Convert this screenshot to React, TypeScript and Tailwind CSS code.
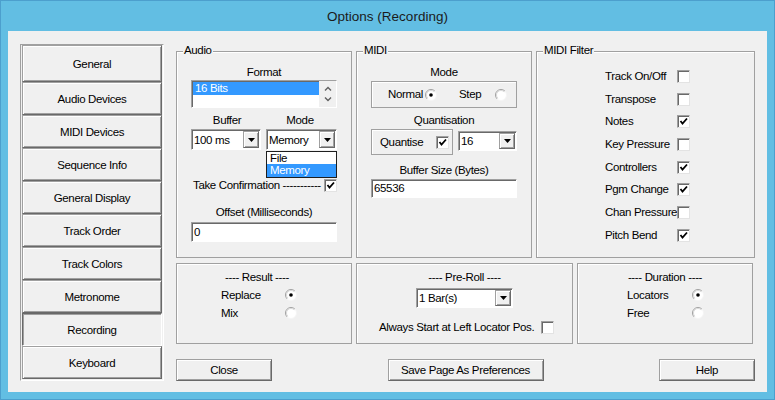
import React from 'react'

const sunken =
  'border border-t-[#a0a0a0] border-l-[#a0a0a0] border-r-white border-b-white shadow-[inset_1px_1px_0_#696969]'
const raised =
  'border border-t-[#a0a0a0] border-l-[#a0a0a0] border-r-[#696969] border-b-[#696969] shadow-[inset_1px_1px_0_#fff,inset_-1px_-1px_0_#a0a0a0]'
const pressed =
  'border border-t-[#696969] border-l-[#696969] border-r-white border-b-white shadow-[inset_1px_1px_0_#a0a0a0]'
const etched = 'border border-[#a0a0a0] shadow-[inset_1px_1px_0_#fff]'

const tabs = [
  'General',
  'Audio Devices',
  'MIDI Devices',
  'Sequence Info',
  'General Display',
  'Track Order',
  'Track Colors',
  'Metronome',
  'Recording',
  'Keyboard',
]

const filters: [string, boolean][] = [
  ['Track On/Off', false],
  ['Transpose', false],
  ['Notes', true],
  ['Key Pressure', false],
  ['Controllers', true],
  ['Pgm Change', true],
  ['Chan Pressure', false],
  ['Pitch Bend', true],
]

function Check({ checked }: { checked?: boolean }) {
  return (
    <span className="w-[13px] h-[13px] shrink-0 bg-white flex items-center justify-center border border-t-[#a0a0a0] border-l-[#a0a0a0] border-r-[#e3e3e3] border-b-[#e3e3e3] shadow-[inset_1px_1px_0_#696969]">
      {checked && (
        <svg width="9" height="9" viewBox="0 0 9 9">
          <polyline points="1.5,4 3.5,6.5 8,1.5" fill="none" stroke="#000" strokeWidth="1.8" />
        </svg>
      )}
    </span>
  )
}

function Radio({ checked }: { checked?: boolean }) {
  return (
    <svg width="12" height="12" viewBox="0 0 12 12" className="shrink-0">
      <circle cx="6" cy="6" r="5.5" fill="#fff" />
      <path d="M2.1 9.9 A5.5 5.5 0 0 1 9.9 2.1" fill="none" stroke="#a0a0a0" />
      <path d="M9.9 2.1 A5.5 5.5 0 0 1 2.1 9.9" fill="none" stroke="#f4f4f4" />
      <path d="M2.8 9.2 A4.5 4.5 0 0 1 9.2 2.8" fill="none" stroke="#d8d8d8" />
      {checked && <circle cx="6" cy="6" r="1.8" fill="#000" />}
    </svg>
  )
}

function Tri() {
  return (
    <svg width="7" height="4" viewBox="0 0 7 4">
      <polygon points="0,0 7,0 3.5,4" fill="#000" />
    </svg>
  )
}

function Combo({ value, className }: { value: string; className: string }) {
  return (
    <div className={`flex bg-white ${sunken} ${className}`}>
      <span className="flex-1 flex items-center pl-[2px] pt-[1px] whitespace-nowrap">{value}</span>
      <span className={`w-[16px] m-[1px] ml-0 bg-[#f0f0f0] flex items-center justify-center ${raised}`}>
        <Tri />
      </span>
    </div>
  )
}

function Group({
  label,
  className,
  children,
}: {
  label?: string
  className: string
  children: React.ReactNode
}) {
  return (
    <div className={`relative ${etched} ${className}`}>
      {label && (
        <span className="absolute left-[6px] -top-[9px] px-[1px] bg-[#f0f0f0] leading-[15px]">{label}</span>
      )}
      {children}
    </div>
  )
}

function Chevron({ up }: { up?: boolean }) {
  return (
    <svg width="8" height="5" viewBox="0 0 8 5">
      <polyline
        points={up ? '1,4.5 4,1.5 7,4.5' : '1,0.5 4,3.5 7,0.5'}
        fill="none"
        stroke="#606060"
        strokeWidth="1.4"
      />
    </svg>
  )
}

function AudioGroup() {
  return (
    <Group label="Audio" className="w-[176px] h-[207px] px-[14px]">
      <div className="mt-[13px] h-[15px] text-center">Format</div>
      <div className={`h-[28px] bg-white flex ${sunken}`}>
        <div className="flex-1 pt-[1px] pl-[1px]">
          <div className="h-[13px] leading-[13px] bg-[#3399ff] text-white pl-[2px]">16 Bits</div>
        </div>
        <div className="w-[17px] bg-[#f0f0f0] flex flex-col items-center justify-between py-[5px]">
          <Chevron up />
          <Chevron />
        </div>
      </div>
      <div className="mt-[5px] h-[15px] flex">
        <span className="w-[72px] text-center">Buffer</span>
        <span className="flex-1 text-center">Mode</span>
      </div>
      <div className="mt-[1px] h-[21px] flex justify-between">
        <Combo value="100 ms" className="w-[70px]" />
        <div className="relative w-[71px]">
          <Combo value="Memory" className="w-full h-full" />
          <div className="absolute left-0 top-full mt-[1px] w-full bg-white border border-[#1e1e1e] z-10">
            <div className="h-[12px] leading-[12px] pl-[3px]">File</div>
            <div className="h-[13px] leading-[13px] pl-[3px] bg-[#3399ff] text-white">Memory</div>
          </div>
        </div>
      </div>
      <div className="mt-[28px] h-[14px] flex items-center justify-between">
        <span className="pl-[2px] whitespace-nowrap">Take Confirmation -----------</span>
        <Check checked />
      </div>
      <div className="mt-[13px] h-[15px] text-center">Offset (Milliseconds)</div>
      <div className={`mt-[2px] h-[20px] bg-white flex items-center pl-[2px] ${sunken}`}>0</div>
    </Group>
  )
}

function MidiGroup() {
  return (
    <Group label="MIDI" className="w-[176px] h-[207px] px-[14px]">
      <div className="mt-[13px] h-[15px] text-center">Mode</div>
      <div className={`mt-[1px] h-[27px] flex items-center pl-[13px] ${etched}`}>
        <span className="w-[40px] text-right pr-[2px]">Normal</span>
        <Radio checked />
        <span className="ml-[22px] w-[36px]">Step</span>
        <Radio />
      </div>
      <div className="mt-[5px] h-[15px] text-center">Quantisation</div>
      <div className="mt-[1px] h-[26px] flex justify-between">
        <div className={`w-[82px] h-full flex items-center pl-[8px] ${etched}`}>
          <span className="w-[56px]">Quantise</span>
          <Check checked />
        </div>
        <Combo value="16" className="w-[59px] h-[20px] mt-[2px]" />
      </div>
      <div className="mt-[8px] h-[15px] text-center">Buffer Size (Bytes)</div>
      <div className={`mt-[1px] h-[19px] bg-white flex items-center pl-[2px] ${sunken}`}>65536</div>
    </Group>
  )
}

function FilterGroup() {
  return (
    <Group label="MIDI Filter" className="w-[219px] h-[207px] pt-[13px]">
      {filters.map(([name, on]) => (
        <div key={name} className="h-[22.7px] flex items-center pl-[68px]">
          <span className="w-[72px] whitespace-nowrap">{name}</span>
          <Check checked={on} />
        </div>
      ))}
    </Group>
  )
}

function RadioRow({ label, checked, w }: { label: string; checked?: boolean; w: string }) {
  return (
    <div className="h-[18px] flex items-center">
      <span className={w}>{label}</span>
      <Radio checked={checked} />
    </div>
  )
}

export default function App() {
  return (
    <div className="w-[775px] h-[400px] bg-[#62bee3] border border-[#4c9fcd] flex flex-col font-['Liberation_Sans',Arial,sans-serif] text-[11.5px] tracking-[-0.35px] leading-[15px] text-black">
      <div className="h-[30px] shrink-0 flex items-center justify-center text-[13.5px] tracking-normal text-[#1b1b1b]">
        Options (Recording)
      </div>
      <div className="mx-[7px] h-[361px] shrink-0 bg-[#f0f0f0] flex pl-[12px] pt-[13px]">
        {/* page list */}
        <div className="w-[144px] h-[337px] px-[1px] border border-t-[#a0a0a0] border-l-[#a0a0a0] border-r-white border-b-white flex flex-col">
          {tabs.map((t, i) => (
            <div
              key={t}
              className={`${i === 0 ? 'h-[37px]' : 'h-[33px]'} shrink-0 flex items-center justify-center pt-[2px] ${
                t === 'Recording' ? pressed : raised
              }`}
            >
              {t}
            </div>
          ))}
        </div>

        <div className="ml-[12px] w-[579px] mt-[7px] flex flex-col">
          <div className="h-[207px] flex gap-[4px]">
            <AudioGroup />
            <MidiGroup />
            <FilterGroup />
          </div>

          <div className="mt-[5px] h-[81px] flex gap-[4px]">
            <Group className="w-[176px] h-full pt-[6px]">
              <div className="h-[15px] text-center pr-[14px]">---- Result ----</div>
              <div className="mt-[1px] pl-[44px]">
                <RadioRow label="Replace" checked w="w-[64px]" />
                <RadioRow label="Mix" w="w-[64px]" />
              </div>
            </Group>
            <Group className="w-[217px] h-full pt-[6px]">
              <div className="h-[15px] text-center">---- Pre-Roll ----</div>
              <Combo value="1 Bar(s)" className="mt-[3px] mx-auto w-[97px] h-[20px]" />
              <div className="mt-[12px] h-[14px] flex items-center pl-[22px]">
                <span className="w-[162px] whitespace-nowrap">Always Start at Left Locator Pos.</span>
                <Check />
              </div>
            </Group>
            <Group className="w-[176px] h-full pt-[6px]">
              <div className="h-[15px] text-center">---- Duration ----</div>
              <div className="mt-[1px] pl-[49px]">
                <RadioRow label="Locators" checked w="w-[65px]" />
                <RadioRow label="Free" w="w-[65px]" />
              </div>
            </Group>
          </div>

          <div className="mt-[15px] flex justify-between">
            <button className={`w-[96px] h-[22px] bg-[#f0f0f0] ${raised}`}>Close</button>
            <button className={`w-[156px] h-[22px] bg-[#f0f0f0] ${raised}`}>Save Page As Preferences</button>
            <button className={`w-[96px] h-[22px] bg-[#f0f0f0] ${raised}`}>Help</button>
          </div>
        </div>
      </div>
    </div>
  )
}
